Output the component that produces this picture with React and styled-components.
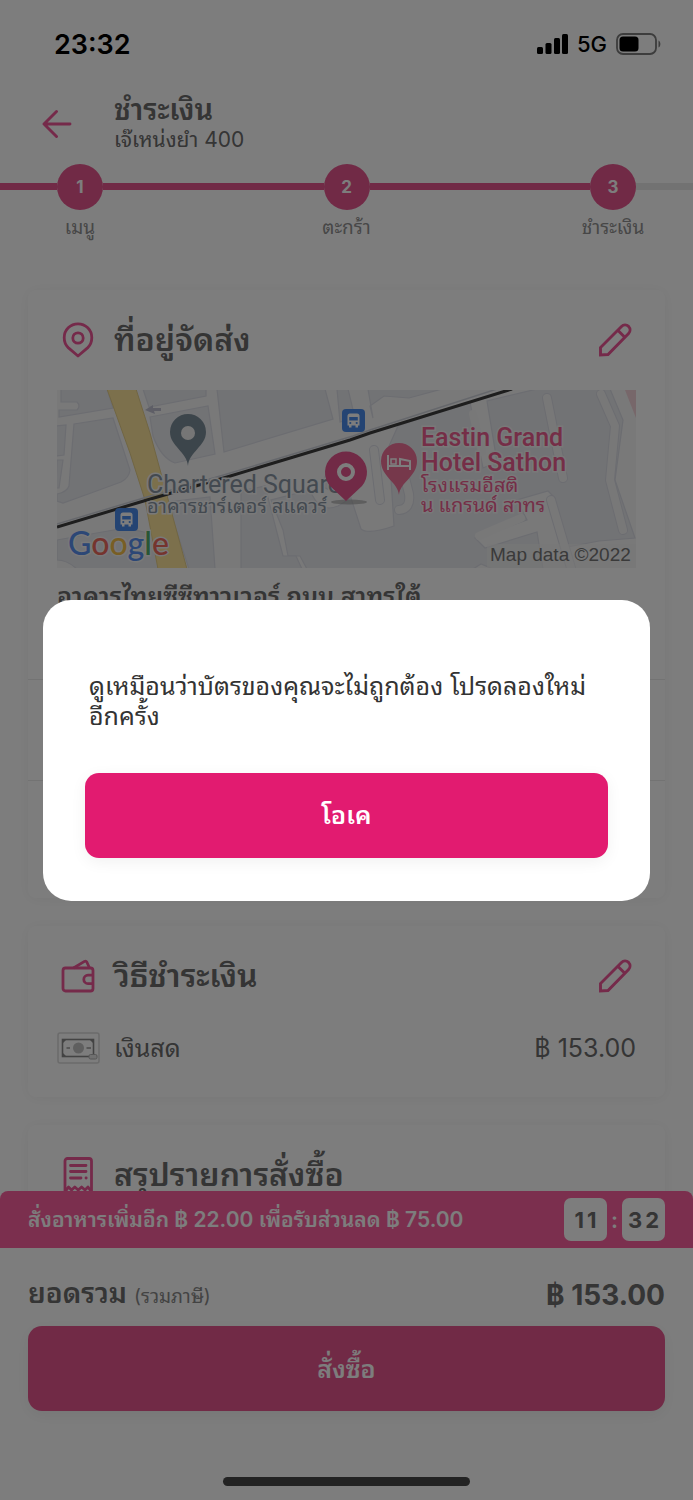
import React, { useState } from "react";
import styled, { createGlobalStyle } from "styled-components";

const PINK = "#e6568f";
const ICON_PINK = "#ee5698";
const TEXT = "#6c6c6c";

const PencilIcon = () => (
  <svg width="34" height="34" viewBox="0 0 34 34" fill="none" stroke={ICON_PINK} strokeWidth="2.9" strokeLinejoin="miter" aria-hidden="true">
    <path d="M2.5 32V24.5L23.5 3.4C25.4 1.5 28.6 1.5 30.6 3.4C32.5 5.4 32.5 8.4 30.6 10.4L10 31.5Z" />
    <path d="M19.8 7.2L26.8 14.2" />
  </svg>
);

const PinIcon = () => (
  <svg width="34" height="38" viewBox="0 0 34 38" fill="none" stroke={ICON_PINK} strokeWidth="2.8" strokeLinejoin="round" aria-hidden="true">
    <path d="M17 35L7.2 26.6C4.6 24.2 3.2 20.6 3.2 16.6A13.8 13.8 0 0 1 30.8 16.6C30.8 20.6 29.4 24.2 26.8 26.6Z" />
    <circle cx="17" cy="17" r="5.2" />
  </svg>
);

const WalletIcon = () => (
  <svg width="34" height="34" viewBox="0 0 34 34" fill="none" stroke={ICON_PINK} strokeWidth="2.8" strokeLinejoin="round" aria-hidden="true">
    <rect x="2" y="9" width="30" height="23" rx="2.5" />
    <path d="M12.5 9L23.5 2.4C24.5 1.9 25.3 2.2 25.8 3L28.5 9" />
    <path d="M32 16.2H27A4.2 4.2 0 0 0 27 24.6H32" />
  </svg>
);

const ReceiptIcon = () => (
  <svg width="34" height="38" viewBox="0 0 34 38" fill="none" stroke={ICON_PINK} strokeWidth="2.8" strokeLinecap="round" strokeLinejoin="round" aria-hidden="true">
    <path d="M4 36V5A2.5 2.5 0 0 1 6.5 2.5H28A2.5 2.5 0 0 1 30.5 5V36L27 31L24 34L20.6 31L17.2 34L13.8 31L10.5 34L7.5 31Z" />
    <path d="M9.5 9.5H25M9.5 15.5H25M9.5 22H20M25 22H25.2" />
  </svg>
);

const CashIcon = () => (
  <svg width="43" height="32" viewBox="0 0 43 32" fill="none" aria-hidden="true">
    <rect x="1" y="1" width="41" height="30" rx="2" stroke="#dadada" strokeWidth="1.5" />
    <rect x="5.5" y="7.5" width="31" height="17" stroke="#8a8a8a" strokeWidth="1.6" />
    <path d="M5 7H10L5 12ZM37 7H32L37 12ZM5 25H10L5 20Z" fill="#8a8a8a" />
    <circle cx="21.5" cy="16" r="5.5" fill="#c2c2c2" />
    <path d="M9.5 16H13M29.5 16H34" stroke="#999" strokeWidth="1.5" />
    <rect x="32" y="22.5" width="8" height="4.5" rx="1.5" fill="#e4e4e4" stroke="#b0b0b0" />
  </svg>
);

const BackIcon = () => (
  <svg width="30" height="30" viewBox="0 0 30 30" fill="none" stroke={ICON_PINK} strokeWidth="2.9" strokeLinecap="round" strokeLinejoin="round" aria-hidden="true">
    <path d="M28 15H2M14.5 2.5L2 15L14.5 27.5" />
  </svg>
);

const SignalIcon = () => (
  <svg width="31" height="22" viewBox="0 0 31 22" aria-hidden="true">
    <rect x="0" y="14" width="6" height="7" rx="1.5" />
    <rect x="8.5" y="10" width="6" height="11" rx="1.5" />
    <rect x="17" y="5" width="6" height="16" rx="1.5" />
    <rect x="25" y="1" width="6" height="20" rx="1.5" />
  </svg>
);

const BatteryIcon = () => (
  <svg width="46" height="24" viewBox="0 0 46 24" aria-hidden="true">
    <rect x="1" y="2" width="39" height="20" rx="6" fill="none" stroke="#7c7c7c" strokeWidth="1.8" />
    <path d="M42.5 8.5C45 9.5 45 14.5 42.5 15.5Z" fill="#7c7c7c" />
    <rect x="3.5" y="4.5" width="19" height="15" rx="3.5" />
  </svg>
);

const Bus = ({ x, y }) => (
  <g transform={`translate(${x} ${y})`}>
    <rect width="23" height="23" rx="4" fill="#4b8cea" />
    <path d="M5.5 7Q5.5 4.5 8 4.5H15Q17.5 4.5 17.5 7V16.5H5.5Z" fill="#fff" />
    <path d="M7.2 8H15.8V11.5H7.2Z" fill="#4b8cea" />
    <circle cx="8.3" cy="14" r="1.1" fill="#4b8cea" />
    <circle cx="14.7" cy="14" r="1.1" fill="#4b8cea" />
    <path d="M7 16H9.5V18.5H7ZM13.5 16H16V18.5H13.5Z" fill="#fff" />
  </g>
);

const DeliveryMap = () => (
  <MapSvg viewBox="0 0 579 178" role="img" aria-label="Map data">
    <rect width="579" height="178" fill="#f6f6f7" />
    <g fill="#e9eaee" stroke="#dcdee6" strokeWidth="1.2">
      <path d="M4 -1H50L56 18L2 27V20H20Q24 16 20 12H4Z" />
      <path d="M-1 36L9 35L7 65L-1 66Z" />
      <path d="M17 34L56 28L73 80Q72 88 64 92L34 103L6 113L0 111V104Q10 102 12 96Z" />
      <path d="M0 70H6L2 98H-1Z" />
      <path d="M86 -1H149V6L92 17Z" />
      <path d="M93 27L151 16L158 64L118 73Q104 68 96 46Z" />
      <path d="M160 -1H268L276 29L167 62Z" />
      <path d="M280 -1H291L298 28L283 32Z" />
      <path d="M316 28L313 16L327 6L352 8L385 -1H311Z" />
      <path d="M341 36L394 18L413 12L426 78L440 72L430 11L480 -1H553L566 30L558 90L578 148L542 151L505 158L498 108L491 101L460 110L470 130L418 148L428 158L480 142L486 179H436L424 174L416 179H250L243 166H231L226 140L214 110L253 100Q262 124 281 116L294 108L304 139Q311 145 337 136L332 56Z" />
      <path d="M0 150L68 138L101 145L105 179H20Q10 170 0 170Z" />
      <path d="M110 112L153 107L158 179H132Z" />
      <path d="M184 101L208 96L226 166H239L245 179H184Z" />
      <path d="M273 76L292 71L299 96L279 103L264 96Z" />
    </g>
    <path d="M579 0V28L568 0Z" fill="#f2d3d8" />
    <g fill="none" strokeLinecap="round" strokeLinejoin="round">
      <g stroke="#dcdee6" strokeWidth="10">
        <path d="M490 8L506 88M317 60L323 110M342 120Q354 119 352 104L347 84" />
        <path d="M494 110L514 178M544 4L558 36L553 90L566 140" />
      </g>
      <g stroke="#f4f4f5" strokeWidth="8">
        <path d="M416 24L425 62M490 8L506 88M317 60L323 110M342 120Q354 119 352 104L347 84" />
        <path d="M464 128L422 146M494 110L514 178M544 4L558 36L553 90L566 140" />
      </g>
    </g>
    <path d="M50 -1H79L93 43L105 87L130 179H101L88 110L73 63Z" fill="#fde59b" stroke="#e5cf8a" />
    <path d="M0 134L90 107L170 84L296 46L313 40L440 -1" fill="none" stroke="#cfd2da" strokeWidth="1.5" />
    <path d="M0 137L90 110L170 87L293 50L313 43L455 -1" fill="none" stroke="#3d3d3d" strokeWidth="3" />
    <path d="M88 20L96 15V18H104V21H97L98 24Z" fill="#bfc0d0" />
    <path d="M131 76C130 62 113 56 113 42A18 18 0 0 1 149 42C149 56 132 62 131 76Z" fill="#7b8d99" />
    <circle cx="131" cy="43" r="7" fill="#f1f1f1" />
    <Bus x="58" y="118" />
    <Bus x="285" y="19" />
    <MapText x="90" y="103" $size={25} $color="#8a96a4">Chartered Square</MapText>
    <MapText x="90" y="123" $size={20} $color="#8a96a4">อาคารชาร์เตอร์ สแควร์</MapText>
    <ellipse cx="292" cy="112" rx="18" ry="2.5" fill="#8c8c8c" opacity=".5" />
    <path d="M289 111L273 96A21 21 0 1 1 305 96Z" fill={PINK} />
    <circle cx="289" cy="82" r="7" fill="none" stroke="#fff" strokeWidth="4" />
    <path d="M342 105C341 92 324 87 324 71A18 18 0 0 1 360 71C360 87 343 92 342 105Z" fill="#f0729a" />
    <path d="M331 65V80M353 80V71L343 69V75M331 76H353" fill="none" stroke="#fff" strokeWidth="2" />
    <rect x="334" y="69" width="5" height="5" fill="none" stroke="#fff" strokeWidth="1.5" />
    <MapText x="364" y="56" $size={25} $weight={500} $color="#ee5f92">Eastin Grand</MapText>
    <MapText x="364" y="81" $size={25} $weight={500} $color="#ee5f92">Hotel Sathon</MapText>
    <MapText x="364" y="102" $size={20} $color="#ee5f92">โรงแรมอีสติ</MapText>
    <MapText x="364" y="122" $size={20} $color="#ee5f92">น แกรนด์ สาทร</MapText>
    <GoogleText x="11" y="165">
      <tspan fill="#5a92f0">G</tspan>
      <tspan fill="#ee6a5f">o</tspan>
      <tspan fill="#f5c04a">o</tspan>
      <tspan fill="#5a92f0">g</tspan>
      <tspan fill="#54b06c">l</tspan>
      <tspan fill="#ee6a5f">e</tspan>
    </GoogleText>
    <rect x="430" y="154" width="149" height="24" fill="#f4f4f4" opacity=".6" />
    <CreditText x="433" y="171">Map data ©2022</CreditText>
  </MapSvg>
);

const steps = ["เมนู", "ตะกร้า", "ชำระเงิน"];

const App = () => {
  const [open, setOpen] = useState(true);
  return (
    <Screen>
      <GlobalStyle />
      <StatusBar>
        <Clock>23:32</Clock>
        <StatusIcons>
          <SignalIcon />
          <span>5G</span>
          <BatteryIcon />
        </StatusIcons>
      </StatusBar>
      <Header>
        <IconButton aria-label="Back">
          <BackIcon />
        </IconButton>
        <div>
          <Title>ชำระเงิน</Title>
          <Vendor>เจ๊เหน่งยำ 400</Vendor>
        </div>
      </Header>
      <Stepper>
        <Segment $edge />
        {steps.map((label, i) => (
          <React.Fragment key={label}>
            {i > 0 && <Segment />}
            <Step>
              <Circle>{i + 1}</Circle>
              <StepLabel>{label}</StepLabel>
            </Step>
          </React.Fragment>
        ))}
        <Segment $edge $pending />
      </Stepper>
      <Content>
        <Card>
          <CardHead>
            <CardIcon>
              <PinIcon />
            </CardIcon>
            <CardTitle>ที่อยู่จัดส่ง</CardTitle>
            <IconButton aria-label="Edit address">
              <PencilIcon />
            </IconButton>
          </CardHead>
          <DeliveryMap />
          <Address>อาคารไทยซีซีทาวเวอร์ ถนน สาทรใต้</Address>
          <CardSection />
          <CardSection $last />
        </Card>
        <Card>
          <CardHead>
            <CardIcon>
              <WalletIcon />
            </CardIcon>
            <CardTitle>วิธีชำระเงิน</CardTitle>
            <IconButton aria-label="Edit payment">
              <PencilIcon />
            </IconButton>
          </CardHead>
          <PaymentRow>
            <CashIcon />
            <PaymentName>เงินสด</PaymentName>
            <span>฿ 153.00</span>
          </PaymentRow>
        </Card>
        <Card>
          <CardHead>
            <CardIcon>
              <ReceiptIcon />
            </CardIcon>
            <CardTitle>สรุปรายการสั่งซื้อ</CardTitle>
          </CardHead>
        </Card>
      </Content>
      <Footer>
        <Promo>
          <PromoText>สั่งอาหารเพิ่มอีก ฿ 22.00 เพื่อรับส่วนลด ฿ 75.00</PromoText>
          <Timer>
            <TimerBox>
              <span>1</span>
              <span>1</span>
            </TimerBox>
            :
            <TimerBox>
              <span>3</span>
              <span>2</span>
            </TimerBox>
          </Timer>
        </Promo>
        <Total>
          <TotalLabel>
            ยอดรวม <small>(รวมภาษี)</small>
          </TotalLabel>
          <TotalPrice>฿ 153.00</TotalPrice>
        </Total>
        <OrderArea>
          <Button $muted>สั่งซื้อ</Button>
        </OrderArea>
        <HomeIndicator />
      </Footer>
      {open && (
        <Overlay>
          <Dialog role="alertdialog" aria-modal="true" aria-describedby="message">
            <Message id="message">
              ดูเหมือนว่าบัตรของคุณจะไม่ถูกต้อง โปรดลองใหม่
              <br />
              อีกครั้ง
            </Message>
            <Button onClick={() => setOpen(false)}>โอเค</Button>
          </Dialog>
        </Overlay>
      )}
    </Screen>
  );
};

const GlobalStyle = createGlobalStyle`
  * {
    box-sizing: border-box;
  }
  body {
    margin: 0;
    font-family: Inter, Thonburi, "Noto Sans Thai Looped", Loma, "Noto Sans Thai", "Noto Sans", sans-serif;
    color: ${TEXT};
    background: #fff;
  }
`;
const Screen = styled.div`
  display: flex;
  flex-direction: column;
  height: 100vh;
  overflow: hidden;
`;
const StatusBar = styled.div`
  display: flex;
  justify-content: space-between;
  align-items: center;
  height: 88px;
  padding: 0 31px 0 54px;
  color: #000;
`;
const Clock = styled.div`
  font-size: 27px;
  font-weight: 600;
`;
const StatusIcons = styled.div`
  display: flex;
  align-items: center;
  gap: 9px;
  font-size: 22px;
  font-weight: 500;
`;
const Header = styled.header`
  display: flex;
  align-items: center;
  gap: 42px;
  height: 76px;
  padding: 0 28px 4px 42px;
`;
const IconButton = styled.button`
  display: flex;
  padding: 0;
  border: none;
  background: none;
  cursor: pointer;
`;
const Title = styled.h1`
  margin: 0;
  font-size: 29px;
  font-weight: 600;
  line-height: 32px;
`;
const Vendor = styled.div`
  font-size: 21px;
  line-height: 28px;
`;
const Stepper = styled.div`
  display: flex;
`;
const Segment = styled.div`
  flex: ${(p) => (p.$edge ? "0 0 57px" : "1")};
  height: 7px;
  margin-top: 19px;
  background: ${(p) => (p.$pending ? "#e9e9e9" : PINK)};
`;
const Step = styled.div`
  display: flex;
  flex-direction: column;
  align-items: center;
  width: 46px;
  height: 98px;
`;
const Circle = styled.div`
  display: flex;
  flex: none;
  align-items: center;
  justify-content: center;
  width: 46px;
  height: 46px;
  border-radius: 50%;
  background: ${PINK};
  color: #fff;
  font-size: 17px;
  font-weight: 700;
`;
const StepLabel = styled.div`
  margin-top: 6px;
  font-size: 19px;
  line-height: 24px;
  white-space: nowrap;
  color: #929292;
`;
const Content = styled.main`
  display: flex;
  flex: 1;
  flex-direction: column;
  gap: 28px;
  min-height: 0;
  padding: 28px 28px 0;
  overflow: hidden;
`;
const Card = styled.section`
  flex: none;
  padding: 0 29px 28px;
  border-radius: 8px;
  background: #fff;
  box-shadow: 0 1px 14px rgba(0, 0, 0, 0.05);
`;
const CardHead = styled.div`
  display: flex;
  align-items: center;
  height: 100px;
  padding-right: 4px;
`;
const CardIcon = styled.div`
  display: flex;
  justify-content: center;
  width: 42px;
  margin-right: 15px;
`;
const CardTitle = styled.h2`
  flex: 1;
  margin: 0;
  font-size: 32px;
  font-weight: 600;
  line-height: 44px;
`;
const MapSvg = styled.svg`
  display: block;
  width: 100%;
`;
const MapText = styled.text`
  font-family: Roboto, Thonburi, "Noto Sans Thai Looped", Loma, "Noto Sans Thai", sans-serif;
  font-size: ${(p) => p.$size}px;
  font-weight: ${(p) => p.$weight || 400};
  fill: ${(p) => p.$color};
  stroke: #f6f6f7;
  stroke-width: 3px;
  paint-order: stroke;
`;
const GoogleText = styled.text`
  font-family: Lato, sans-serif;
  font-size: 32px;
  font-weight: 500;
  stroke: #f6f6f7;
  stroke-width: 3px;
  paint-order: stroke;
`;
const CreditText = styled.text`
  font-family: "Liberation Sans", Arial, sans-serif;
  font-size: 19px;
  fill: #777;
`;
const Address = styled.div`
  height: 111px;
  padding-top: 10px;
  font-size: 25px;
  font-weight: 600;
  line-height: 36px;
`;
const CardSection = styled.div`
  height: ${(p) => (p.$last ? "90px" : "101px")};
  margin: 0 -29px;
  border-top: 1px solid #ebebeb;
`;
const PaymentRow = styled.div`
  display: flex;
  align-items: center;
  gap: 14px;
  height: 43px;
  font-size: 25px;
  line-height: 30px;
`;
const PaymentName = styled.span`
  flex: 1;
`;
const Footer = styled.footer`
  position: relative;
  flex: none;
  background: #fff;
`;
const Promo = styled.div`
  display: flex;
  align-items: center;
  justify-content: space-between;
  height: 57px;
  padding: 0 28px;
  border-radius: 8px 8px 0 0;
  background: #fb619f;
  color: #fff;
  font-weight: 600;
  line-height: 28px;
`;
const PromoText = styled.div`
  font-size: 21px;
`;
const Timer = styled.div`
  display: flex;
  align-items: center;
  gap: 4px;
  font-size: 22px;
`;
const TimerBox = styled.div`
  display: flex;
  align-items: center;
  justify-content: center;
  gap: 3px;
  width: 43px;
  height: 43px;
  border-radius: 7px;
  background: #fff;
  color: ${TEXT};
  font-weight: 700;
`;
const Total = styled.div`
  display: flex;
  align-items: center;
  justify-content: space-between;
  height: 78px;
  padding: 16px 28px 0;
  line-height: 36px;
`;
const TotalLabel = styled.div`
  font-size: 28px;
  font-weight: 600;
  small {
    font-size: 19px;
    font-weight: 400;
    color: #8a8a8a;
  }
`;
const TotalPrice = styled.div`
  font-size: 28px;
  font-weight: 700;
`;
const OrderArea = styled.div`
  padding: 0 28px;
`;
const Button = styled.button`
  display: block;
  width: 100%;
  height: 85px;
  border: none;
  border-radius: 14px;
  background: ${(p) => (p.$muted ? PINK : "#e21b70")};
  box-shadow: 0 4px 16px rgba(0, 0, 0, 0.06);
  color: #fff;
  font-family: inherit;
  font-size: 25px;
  font-weight: 600;
  line-height: 30px;
  cursor: pointer;
`;
const HomeIndicator = styled.div`
  width: 247px;
  height: 9px;
  margin: 66px auto 14px;
  border-radius: 5px;
  background: #484848;
`;
const Overlay = styled.div`
  position: fixed;
  inset: 0;
  display: flex;
  align-items: center;
  padding: 0 43px;
  background: rgba(0, 0, 0, 0.51);
`;
const Dialog = styled.div`
  flex: 1;
  padding: 71px 42px 43px;
  border-radius: 28px;
  background: #fff;
`;
const Message = styled.p`
  margin: 0 4px 42px;
  font-size: 25px;
  line-height: 30px;
  color: #333;
`;

export default App;
